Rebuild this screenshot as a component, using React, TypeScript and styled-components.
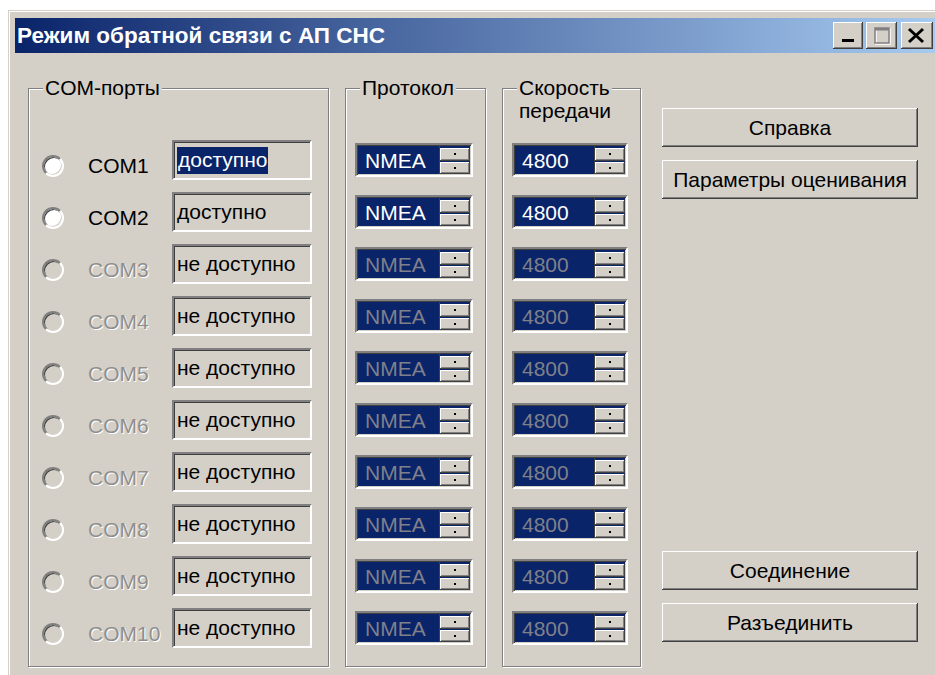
import React from "react";
import styled, { createGlobalStyle } from "styled-components";

const GlobalStyle = createGlobalStyle`
  html, body {
    margin: 0;
    padding: 0;
    background: #ffffff;
    overflow: hidden;
  }
  body {
    font-family: "Liberation Sans", Arial, sans-serif;
  }
`;

const FACE = "#d4d0c8";
const NAVY = "#0a246a";

const Window = styled.div`
  margin: 10px 0 0 8px;
  width: 927px;
  height: 665px;
  box-sizing: border-box;
  background: ${FACE};
  border-top: 1px solid ${FACE};
  border-left: 1px solid ${FACE};
  box-shadow: inset 1px 1px 0 #ffffff;
  padding: 7px 0 0 6px;
  display: flex;
  flex-direction: column;
`;

const TitleBar = styled.div`
  height: 35px;
  display: flex;
  align-items: center;
  padding: 0 2px;
  background: linear-gradient(to right, ${NAVY}, #a6caf0);
`;

const Title = styled.span`
  flex: 1;
  color: #ffffff;
  font-weight: bold;
  font-size: 22.5px;
  white-space: nowrap;
`;

const CaptionButton = styled.button<{ $gap?: number; $w: number }>`
  width: ${(p) => p.$w}px;
  height: 27px;
  margin-left: ${(p) => p.$gap ?? 0}px;
  padding: 0;
  border: none;
  background: ${FACE};
  box-shadow: inset -1px -1px 0 #404040, inset 1px 1px 0 #ffffff,
    inset -2px -2px 0 #808080;
  display: flex;
  align-items: center;
  justify-content: center;
`;

const Body = styled.div`
  display: flex;
  align-items: stretch;
  gap: 16px;
  padding: 23px 0 0 13px;
`;

const Group = styled.fieldset<{ $w: number }>`
  width: ${(p) => p.$w}px;
  box-sizing: border-box;
  margin: 0;
  padding: 0 0 12px 0;
  min-width: 0;
  border: 1px solid #808080;
  box-shadow: inset 1px 1px 0 #ffffff, 1px 1px 0 #ffffff;
`;

const Legend = styled.legend`
  margin-left: 14px;
  padding: 0 2px;
  font-size: 21px;
  line-height: 24px;
  color: #000000;
  background: ${FACE};
`;

const Head = styled.div`
  height: 34px;
  padding-left: 16px;
  font-size: 21px;
  line-height: 22px;
  color: #000000;
`;

const Row = styled.div<{ $pad: number }>`
  height: 52px;
  display: flex;
  align-items: center;
  padding-left: ${(p) => p.$pad}px;
`;

const Radio = styled.span<{ $on: boolean }>`
  width: 22px;
  height: 22px;
  margin-top: 12px;
  box-sizing: border-box;
  border-radius: 50%;
  border: 2px solid;
  border-color: #808080 #ffffff #ffffff #808080;
  background: ${(p) => (p.$on ? "#ffffff" : FACE)};
  box-shadow: inset 1px 1px 0 #404040, inset -1px -1px 0 ${FACE};
  flex: none;
`;

const PortName = styled.span<{ $on: boolean }>`
  width: 84px;
  margin: 12px 0 0 24px;
  font-size: 21px;
  color: ${(p) => (p.$on ? "#000000" : "#8f8f8f")};
  text-shadow: ${(p) => (p.$on ? "none" : "1px 1px 0 #ffffff")};
  white-space: nowrap;
`;

const StatusField = styled.div`
  width: 140px;
  height: 40px;
  box-sizing: border-box;
  border: 2px solid;
  border-color: #808080 #ffffff #ffffff #808080;
  box-shadow: inset 1px 1px 0 #404040, inset -1px -1px 0 ${FACE};
  background: ${FACE};
  padding-left: 3px;
  display: flex;
  align-items: center;
  font-size: 21px;
  color: #000000;
  white-space: nowrap;
`;

const Selected = styled.span`
  background: ${NAVY};
  color: #ffffff;
  padding: 1px 1px 2px;
`;

const Combo = styled.div<{ $w: number }>`
  width: ${(p) => p.$w}px;
  height: 34px;
  box-sizing: border-box;
  border: 2px solid;
  border-color: #808080 #ffffff #ffffff #808080;
  box-shadow: inset 1px 1px 0 #404040, inset -1px -1px 0 ${FACE};
  background: ${NAVY};
  padding: 1px;
  display: flex;
`;

const ComboText = styled.span<{ $on: boolean }>`
  flex: 1;
  padding-left: 7px;
  font-size: 21px;
  line-height: 30px;
  color: ${(p) => (p.$on ? "#ffffff" : "#7f8089")};
`;

const Spin = styled.div`
  width: 30px;
  padding-top: 2px;
  display: flex;
  flex-direction: column;
  gap: 1px;
  border-left: 1px solid #404040;
`;

const SpinButton = styled.span`
  flex: 1;
  background: ${FACE};
  box-shadow: inset -1px -1px 0 #404040, inset 1px 1px 0 #ffffff,
    inset -2px -2px 0 #808080;
  display: flex;
  align-items: center;
  justify-content: center;

  &::after {
    content: "";
    width: 2px;
    height: 2px;
    background: #000000;
  }
`;

const Actions = styled.div`
  width: 256px;
  margin-left: 5px;
  padding: 32px 0 25px;
  display: flex;
  flex-direction: column;
  gap: 13px;
`;

const Spacer = styled.div`
  flex: 1;
`;

const PushButton = styled.button`
  height: 39px;
  padding: 0;
  border: none;
  background: ${FACE};
  box-shadow: inset -1px -1px 0 #404040, inset 1px 1px 0 #ffffff,
    inset -2px -2px 0 #808080;
  font-family: "Liberation Sans", Arial, sans-serif;
  font-size: 21px;
  color: #000000;
  white-space: nowrap;
`;

const ports = Array.from({ length: 10 }, (_, i) => ({
  name: `COM${i + 1}`,
  on: i < 2,
}));

function MinGlyph() {
  return (
    <svg width="30" height="27" viewBox="0 0 30 27">
      <rect x="9" y="17" width="12" height="3" fill="#000" />
    </svg>
  );
}

function MaxGlyph() {
  return (
    <svg width="31" height="27" viewBox="0 0 31 27">
      <rect x="9" y="6" width="14" height="15" fill="none" stroke="#ffffff" strokeWidth="1.5" transform="translate(1 1)" />
      <rect x="9" y="6" width="14" height="15" fill="none" stroke="#808080" strokeWidth="1.5" />
      <rect x="9" y="6" width="14" height="2.5" fill="#808080" />
    </svg>
  );
}

function CloseGlyph() {
  return (
    <svg width="32" height="27" viewBox="0 0 32 27">
      <path d="M8 7 L22 20 M22 7 L8 20" stroke="#000" strokeWidth="3" />
    </svg>
  );
}

export default function App() {
  return (
    <>
      <GlobalStyle />
      <Window>
        <TitleBar>
          <Title>Режим обратной связи с АП СНС</Title>
          <CaptionButton $w={30}>
            <MinGlyph />
          </CaptionButton>
          <CaptionButton $w={31} $gap={3}>
            <MaxGlyph />
          </CaptionButton>
          <CaptionButton $w={32} $gap={4}>
            <CloseGlyph />
          </CaptionButton>
        </TitleBar>
        <Body>
          <Group $w={301}>
            <Legend>COM-порты</Legend>
            <Head />
            {ports.map((p, i) => (
              <Row key={p.name} $pad={13}>
                <Radio $on={p.on} />
                <PortName $on={p.on}>{p.name}</PortName>
                <StatusField>
                  {i === 0 ? (
                    <Selected>доступно</Selected>
                  ) : p.on ? (
                    "доступно"
                  ) : (
                    "не доступно"
                  )}
                </StatusField>
              </Row>
            ))}
          </Group>
          <Group $w={141}>
            <Legend>Протокол</Legend>
            <Head />
            {ports.map((p) => (
              <Row key={p.name} $pad={9}>
                <Combo $w={118}>
                  <ComboText $on={p.on}>NMEA</ComboText>
                  <Spin>
                    <SpinButton />
                    <SpinButton />
                  </Spin>
                </Combo>
              </Row>
            ))}
          </Group>
          <Group $w={139}>
            <Legend>Скорость</Legend>
            <Head>передачи</Head>
            {ports.map((p) => (
              <Row key={p.name} $pad={9}>
                <Combo $w={116}>
                  <ComboText $on={p.on}>4800</ComboText>
                  <Spin>
                    <SpinButton />
                    <SpinButton />
                  </Spin>
                </Combo>
              </Row>
            ))}
          </Group>
          <Actions>
            <PushButton>Справка</PushButton>
            <PushButton>Параметры оценивания</PushButton>
            <Spacer />
            <PushButton>Соединение</PushButton>
            <PushButton>Разъединить</PushButton>
          </Actions>
        </Body>
      </Window>
    </>
  );
}
